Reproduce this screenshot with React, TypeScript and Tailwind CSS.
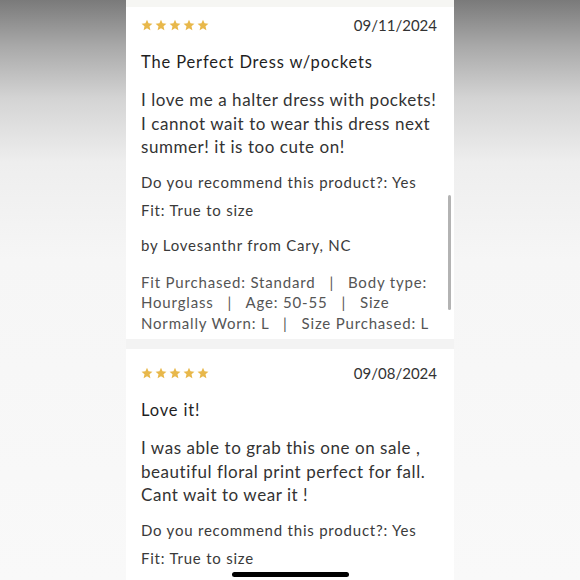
import React from 'react';

type Review = {
  date: string;
  title: string;
  body: string[];
  recommend: string;
  fit: string;
  author?: string;
  meta?: string[];
};

const reviews: Review[] = [
  {
    date: '09/11/2024',
    title: 'The Perfect Dress w/pockets',
    body: [
      'I love me a halter dress with pockets!',
      'I cannot wait to wear this dress next',
      'summer! it is too cute on!',
    ],
    recommend: 'Yes',
    fit: 'True to size',
    author: 'by Lovesanthr from Cary, NC',
    meta: [
      'Fit Purchased: Standard   |   Body type:',
      'Hourglass   |   Age: 50-55   |   Size',
      'Normally Worn: L   |   Size Purchased: L',
    ],
  },
  {
    date: '09/08/2024',
    title: 'Love it!',
    body: [
      'I was able to grab this one on sale ,',
      'beautiful floral print perfect for fall.',
      'Cant wait to wear it !',
    ],
    recommend: 'Yes',
    fit: 'True to size',
  },
];

function Stars() {
  return (
    <div className="flex items-center gap-[2px]">
      {[0, 1, 2, 3, 4].map((i) => (
        <svg key={i} width="12" height="12" viewBox="0 0 24 24">
          <path
            d="M12 1.5l3.1 7.2 7.8.7-5.9 5.2 1.8 7.7L12 18.3 5.2 22.3 7 14.6 1.1 9.4l7.8-.7z"
            fill="#e8b84b"
          />
        </svg>
      ))}
    </div>
  );
}

function ReviewCard({ review, first }: { review: Review; first?: boolean }) {
  return (
    <div className={`bg-white pl-[15px] pr-[17px] ${first ? 'pt-[8px] pb-[6px]' : 'pt-[14px] pb-[20px]'}`}>
      <div className="flex items-center justify-between h-[20px]">
        <Stars />
        <span className="text-[15px] text-[#333]">{review.date}</span>
      </div>
      <div className="mt-[16px] text-[16.5px] leading-[22px] tracking-[0.85px] text-[#1f1f1f]">
        {review.title}
      </div>
      <div className="mt-[15px] text-[17px] leading-[23.5px] tracking-[0.55px] text-[#333]">
        {review.body.map((line) => (
          <div key={line}>{line}</div>
        ))}
      </div>
      <div className="mt-[13px] text-[15px] leading-[20px] tracking-[0.78px] text-[#3a3a3a]">
        Do you recommend this product?: {review.recommend}
      </div>
      <div className="mt-[8px] text-[15px] leading-[20px] tracking-[0.78px] text-[#3a3a3a]">
        Fit: {review.fit}
      </div>
      {review.author && (
        <div className="mt-[15px] text-[15px] leading-[20px] tracking-[0.78px] text-[#3a3a3a]">
          {review.author}
        </div>
      )}
      {review.meta && (
        <div className="mt-[17px] text-[15px] leading-[20.5px] tracking-[0.82px] text-[#555] whitespace-pre">
          {review.meta.map((line) => (
            <div key={line}>{line}</div>
          ))}
        </div>
      )}
    </div>
  );
}

export default function App() {
  return (
    <div
      className="relative h-[580px] w-[580px] overflow-hidden bg-[linear-gradient(to_bottom,#7a7a7a_0%,#a9a9a9_8%,#d4d4d4_17%,#eeeeee_28%,#f6f6f6_45%,#f9f9f9_100%)]"
      style={{ fontFamily: 'Lato, "Noto Sans", sans-serif' }}
    >
      <div className="relative mx-auto h-full w-[328px] overflow-hidden bg-[#f4f4f2]">
        <div className="h-[7px] bg-[#f6f6f3]" />
        <ReviewCard review={reviews[0]} first />
        <div className="h-[10px] bg-[#f3f3f3]" />
        <ReviewCard review={reviews[1]} />
        <div className="absolute left-[322px] top-[195px] h-[115px] w-[3px] rounded-full bg-[#b3b3b3]" />
      </div>
      <div className="absolute left-[232px] top-[572px] h-[5px] w-[117px] rounded-full bg-black" />
    </div>
  );
}
